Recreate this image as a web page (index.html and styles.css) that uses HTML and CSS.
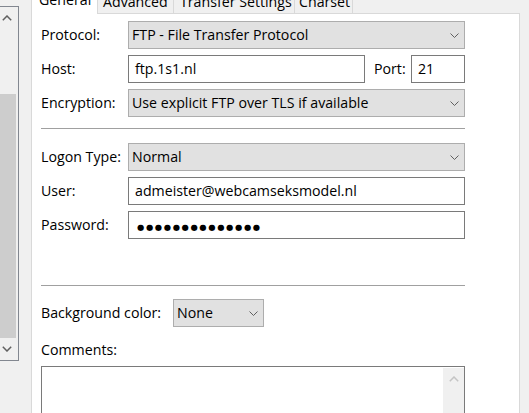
FILE: index.html
```html
<!DOCTYPE html>
<html>
<head>
<meta charset="utf-8">
<link rel="stylesheet" href="styles.css">
</head>
<body>
<div class="tree">
  <div class="vscroll">
    <div class="sb-btn"><svg width="10" height="6" viewBox="0 0 10 6"><polyline points="0.8,5.2 5,1 9.2,5.2" fill="none" stroke="#606060" stroke-width="1.5"/></svg></div>
    <div class="sb-track"><div class="sb-thumb"></div></div>
    <div class="sb-btn"><svg width="10" height="6" viewBox="0 0 10 6"><polyline points="0.8,0.8 5,5 9.2,0.8" fill="none" stroke="#606060" stroke-width="1.5"/></svg></div>
  </div>
</div>
<div class="tabctl">
  <div class="tabs">
    <div class="tab sel">General</div>
    <div class="tab t-adv">Advanced</div>
    <div class="tab t-xfer">Transfer Settings</div>
    <div class="tab t-cs">Charset</div>
    <div class="tabfill"></div>
  </div>
  <div class="page">
    <div class="form">
      <div class="row first">
        <div class="lbl">Protocol:</div>
        <div class="select wide"><span>FTP - File Transfer Protocol</span><svg class="chev" width="9" height="5" viewBox="0 0 9 5"><polyline points="0.5,0.5 4.5,4.5 8.5,0.5" fill="none" stroke="#606060" stroke-width="1"/></svg></div>
      </div>
      <div class="row">
        <div class="lbl">Host:</div>
        <div class="input host">ftp.1s1.nl</div>
        <div class="lbl port-lbl">Port:</div>
        <div class="input port">21</div>
      </div>
      <div class="row">
        <div class="lbl">Encryption:</div>
        <div class="select wide"><span>Use explicit FTP over TLS if available</span><svg class="chev" width="9" height="5" viewBox="0 0 9 5"><polyline points="0.5,0.5 4.5,4.5 8.5,0.5" fill="none" stroke="#606060" stroke-width="1"/></svg></div>
      </div>
      <div class="sep sep1"></div>
      <div class="row logon">
        <div class="lbl">Logon Type:</div>
        <div class="select wide"><span>Normal</span><svg class="chev" width="9" height="5" viewBox="0 0 9 5"><polyline points="0.5,0.5 4.5,4.5 8.5,0.5" fill="none" stroke="#606060" stroke-width="1"/></svg></div>
      </div>
      <div class="row">
        <div class="lbl">User:</div>
        <div class="input wide">admeister@webcamseksmodel.nl</div>
      </div>
      <div class="row">
        <div class="lbl">Password:</div>
        <div class="input wide pw">●●●●●●●●●●●●●●</div>
      </div>
      <div class="sep sep2"></div>
      <div class="row bgrow">
        <div class="lbl bglbl">Background color:</div>
        <div class="select small"><span>None</span><svg class="chev" width="9" height="5" viewBox="0 0 9 5"><polyline points="0.5,0.5 4.5,4.5 8.5,0.5" fill="none" stroke="#606060" stroke-width="1"/></svg></div>
      </div>
      <div class="comments-lbl">Comments:</div>
      <div class="textarea">
        <div class="ta-scroll">
          <div class="ta-btn"><svg width="10" height="6" viewBox="0 0 10 6"><polyline points="0.8,5.2 5,1 9.2,5.2" fill="none" stroke="#c4c4c4" stroke-width="1.5"/></svg></div>
        </div>
      </div>
    </div>
  </div>
</div>
</body>
</html>
```
FILE: styles.css
```css
* { box-sizing: border-box; }
html, body { margin: 0; height: 100%; }
body {
  background: #f0f0f0;
  font-family: "Open Sans", "Noto Sans", sans-serif;
  font-size: 14.2px;
  line-height: 20px;
  color: #000;
  display: flex;
  overflow: hidden;
  width: 529px;
  height: 413px;
}

/* left tree with scrollbar */
.tree {
  flex: none;
  width: 19px;
  height: 355px;
  margin-top: 6px;
  border: 1px solid #828790;
  border-left: none;
  background: #f0f0f0;
  display: flex;
}
.vscroll {
  width: 18px;
  display: flex;
  flex-direction: column;
  background: #f0f0f0;
}
.sb-btn {
  height: 22px;
  flex: none;
  display: flex;
  align-items: center;
  padding-left: 2px;
}
.sb-btn svg { display: block; }
.sb-track { flex: 1; }
.sb-thumb {
  margin-top: 65px;
  height: 244px;
  width: 16px;
  background: #cdcdcd;
}

/* tab control */
.tabctl {
  flex: none;
  margin-left: 12px;
  width: 489px;
  height: 413px;
  display: flex;
  flex-direction: column;
}
.tabs {
  flex: none;
  display: flex;
  height: 23px;
  margin-top: -9px;
}
.tab {
  flex: none;
  height: 23px;
  border-top: 1px solid #d9d9d9;
  border-right: 1px solid #d9d9d9;
  border-bottom: 1px solid #d9d9d9;
  background: #f0f0f0;
  white-space: nowrap;
  overflow: hidden;
  line-height: 20px;
}
.tab.sel {
  width: 67px;
  background: #fff;
  border-left: 1px solid #d9d9d9;
  border-bottom: none;
  line-height: 16px;
  padding-left: 7px;
}
.t-adv { width: 76px; padding-left: 5px; }
.t-xfer { width: 121px; padding-left: 6px; }
.t-cs { width: 58px; padding-left: 4px; }
.tabfill {
  flex: 1;
  border-bottom: 1px solid #d9d9d9;
}
.page {
  flex: 1;
  min-height: 0;
  overflow: hidden;
  background: #fff;
  border-left: 1px solid #d9d9d9;
  border-right: 1px solid #d9d9d9;
  padding: 7px 0 0 9px;
}

/* form */
.form {
  width: 424px;
  display: flex;
  flex-direction: column;
}
.row {
  display: flex;
  align-items: center;
  height: 28px;
  margin-top: 6px;
  flex: none;
}
.row.first { margin-top: 0; }
.row.logon { margin-top: 14px; }
.row.bgrow { margin-top: 13px; }
.lbl {
  flex: none;
  width: 87px;
  white-space: nowrap;
}
.bglbl { width: 132px; }
.port-lbl { width: 37px; margin-left: 9px; }

.select {
  flex: none;
  height: 28px;
  border: 1px solid #adadad;
  background: #e1e1e1;
  display: flex;
  align-items: center;
  justify-content: space-between;
  padding: 0 5px 0 3px;
  white-space: nowrap;
}
.select .chev { display: block; flex: none; }
.select.wide { width: 337px; }
.select.small { width: 91px; padding-right: 5px; }

.input {
  flex: none;
  height: 28px;
  border: 1px solid #7a7a7a;
  background: #fff;
  display: flex;
  align-items: center;
  padding-left: 6px;
  white-space: nowrap;
}
.input.wide { width: 337px; }
.input.host { width: 237px; }
.input.port { width: 54px; }
.input.pw {
  font-family: "DejaVu Sans", sans-serif;
  font-size: 8.4px;
  letter-spacing: 1.6px;
  padding-left: 8px;
  padding-top: 3px;
}

.sep {
  flex: none;
  height: 1px;
  background: #a0a0a0;
}
.sep1 { margin-top: 11px; }
.sep2 { margin-top: 46px; }

.comments-lbl {
  flex: none;
  height: 20px;
  margin-top: 13px;
}
.textarea {
  flex: none;
  margin-top: 6px;
  height: 47px;
  border: 1px solid #7a7a7a;
  border-bottom: none;
  background: #fff;
  display: flex;
  justify-content: flex-end;
  padding-top: 1px;
}
.ta-scroll {
  width: 21px;
  background: #f0f0f0;
}
.ta-btn {
  height: 21px;
  display: flex;
  align-items: center;
  justify-content: center;
}
.ta-btn svg { display: block; }
```
